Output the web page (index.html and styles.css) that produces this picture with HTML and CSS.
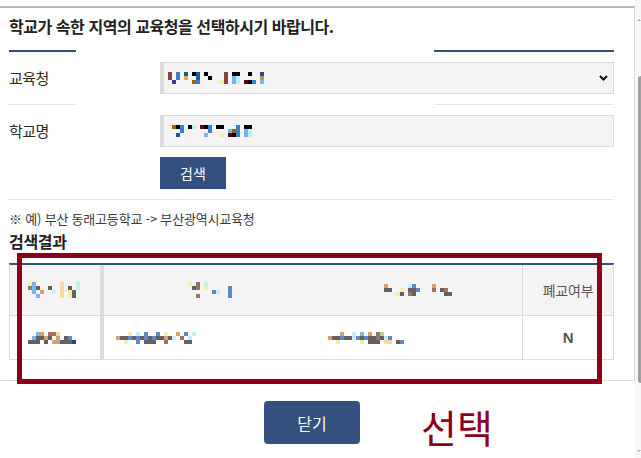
FILE: index.html
```html
<!DOCTYPE html>
<html lang="ko">
<head>
<meta charset="utf-8">
<title>교육청 선택</title>
<link rel="stylesheet" href="styles.css">
</head>
<body>
<div class="page">
  <div class="main">
    <div class="frame">
      <h2 class="title">학교가 속한 지역의 교육청을 선택하시기 바랍니다.</h2>
      <div class="rule"></div>
      <div class="field">
        <div class="label">교육청</div>
        <div class="control select">
          <span class="mosaic" data-p="r.b.B.kB.k....r.kk..k..n|r.b.o..B..k...r.lc.....v|.n....Ob.....yr.lc.dkb.l"></span>
          <svg class="chev" width="9" height="6" viewBox="0 0 9 6"><polyline points="1,1 4.5,4.5 8,1" fill="none" stroke="#111" stroke-width="2"/></svg>
        </div>
      </div>
      <div class="sep broken"></div>
      <div class="field second">
        <div class="label">학교명</div>
        <div class="control input">
          <span class="mosaic" data-p="Okb.kc.dkb.kk...b.kk|..b......b....lOb.lc|.B......l...y.dkb.lc"></span>
        </div>
      </div>
      <div class="actions"><button class="btn-search" type="button">검색</button></div>
      <div class="sep"></div>
      <p class="note">※ 예) 부산 동래고등학교 -&gt; 부산광역시교육청</p>
      <h3 class="subtitle">검색결과</h3>
      <div class="table">
        <div class="row head">
          <div class="cell c1"><span class="mosaic" data-p="yl......t...c.|wlg..g..t.g.c.|.l.p..c.t.yg..|..l.....t.yg.."></span></div>
          <div class="cell c2"><span class="mosaic" data-p="y.w.c......|.gw.y.....s|......sc..s|..w.......s"></span></div>
          <div class="cell c3"><span class="mosaic" data-p="p.....cs....p....|gg..y.ggs...w.gw.|...yg.wg.......gg"></span></div>
          <div class="cell c4">폐교여부</div>
        </div>
        <div class="row body">
          <div class="cell c1"><span class="mosaic" data-p="..lp.wwt......|.lggpg.p.gs...|ggg.g.ppgggn.."></span></div>
          <div class="cell c2"><span class="mosaic" data-p="...y.c.s..s.y..p.s.c|pggsgsgsgsggpgc.w.c.|..y..s.ggg..w....gg."></span></div>
          <div class="cell c3"><span class="mosaic" data-p="...p..c.l.p.we......|pggsggcsgsggwgcs....|..y.....y.ggg.tt.gs."></span></div>
          <div class="cell c4 strong">N</div>
        </div>
      </div>
    </div>
    <div class="footer"><button class="btn-close" type="button">닫기</button></div>
  </div>
  <div class="scrollbar">
    <span class="arrow up"></span>
    <div class="track"><div class="thumb"></div></div>
    <span class="arrow down"></span>
  </div>
  <div class="annot-box"></div>
  <div class="annot-text">선택</div>
</div>
<script src="app.js"></script>
</body>
</html>
```

FILE: styles.css
```css
* { box-sizing: border-box; }
html, body { margin: 0; padding: 0; background: #fff; }
body {
  font-family: "Noto Sans CJK KR", "Noto Sans", "Liberation Sans", sans-serif;
  color: #333;
  width: 641px;
  height: 458px;
  overflow: hidden;
}
.page {
  position: relative;
  display: flex;
  width: 641px;
  height: 458px;
}
.main {
  width: 635px;
  padding-top: 6px;
}
.frame {
  width: 635px;
  border-top: 2px solid #b9b9b9;
  border-right: 1px solid #dcdcdc;
  border-bottom: 1px solid #dcdcdc;
  padding: 0 20px 20px 9px;
}
.title {
  margin: 8px 0 14px;
  font-size: 16px;
  line-height: 20px;
  font-weight: 700;
  letter-spacing: -0.45px;
  color: #222;
}
.rule {
  height: 2px;
  background: linear-gradient(to right, #34507e 0, #34507e 67px, transparent 67px, transparent 425px, #34507e 425px);
}
.field {
  display: flex;
  align-items: center;
  padding: 10px 0;
}
.field.second { padding-bottom: 0; }
.label {
  width: 151px;
  font-size: 15px;
  line-height: 20px;
  letter-spacing: -0.5px;
  color: #2a2a2a;
}
.control {
  flex: 1;
  height: 32px;
  background: #f4f4f4;
  border: 1px solid #dcdcdc;
  border-left: 4px solid #dcdcdc;
  display: flex;
  align-items: center;
  justify-content: space-between;
  padding: 0 5px 0 4px;
}
.control.input { padding-left: 8px; }
.chev { display: block; }
.sep {
  height: 1px;
  background: #e6e6e6;
}
.sep.broken {
  background: linear-gradient(to right, #e6e6e6 0, #e6e6e6 67px, transparent 67px, transparent 425px, #e6e6e6 425px);
}
.actions {
  padding: 10px 0 10px 151px;
}
.btn-search {
  display: block;
  width: 66px;
  height: 32px;
  border: 0;
  background: #34507e;
  color: #fff;
  font-family: inherit;
  font-size: 14px;
  line-height: 32px;
  padding: 0;
}
.note {
  margin: 8px 0 0;
  font-size: 13px;
  line-height: 22px;
  letter-spacing: -0.2px;
  color: #3a3a3a;
}
.subtitle {
  margin: 0 0 11px;
  font-size: 16px;
  line-height: 22px;
  font-weight: 700;
  letter-spacing: -0.3px;
  color: #222;
}
.table {
  border-top: 2px solid #34507e;
  border-left: 1px solid #dcdcdc;
  border-right: 1px solid #dcdcdc;
  border-bottom: 1px solid #dcdcdc;
}
.row { display: flex; }
.row.head {
  height: 51px;
  background: #f4f4f4;
  border-bottom: 1px solid #dcdcdc;
}
.row.body { height: 43px; background: #fff; }
.cell {
  display: flex;
  align-items: center;
  justify-content: center;
  font-size: 14px;
  color: #555;
}
.c1 { width: 94px; border-right: 4px solid #dcdcdc; justify-content: flex-start; padding-left: 18px; }
.c2 { width: 208px; }
.c3 { width: 210px; }
.c4 { flex: 1; border-left: 1px solid #dcdcdc; letter-spacing: -0.2px; }
.strong { font-weight: 700; font-family: "Liberation Sans", sans-serif; font-size: 15px; }
.row.head .c2 { justify-content: flex-start; padding-left: 84px; }
.row.head .c3 { justify-content: flex-start; padding-left: 72px; }
.row.body .c2 { justify-content: flex-start; padding-left: 12px; }
.row.body .c3 { justify-content: flex-start; padding-left: 16px; }

.mosaic { display: inline-flex; flex-direction: column; }
.mrow { display: flex; height: 4px; }
.mc { width: 4px; height: 4px; }

.footer {
  display: flex;
  padding: 20px 0 0 264px;
}
.btn-close {
  width: 96px;
  height: 43px;
  border: 0;
  border-radius: 4px;
  background: #34507e;
  color: #fff;
  font-family: inherit;
  font-size: 16px;
  padding: 0;
}
.scrollbar {
  width: 6px;
  height: 458px;
  background: #f7f7f7;
  display: flex;
  flex-direction: column;
  align-items: flex-end;
}
.arrow {
  width: 0; height: 0;
  border-left: 2px solid transparent;
  border-right: 2px solid transparent;
}
.arrow.up { border-bottom: 2px solid #aaa; margin-top: 19px; }
.arrow.down { border-top: 2px solid #aaa; margin-bottom: 6px; }
.track { flex: 1; width: 6px; display: flex; justify-content: flex-end; }
.thumb {
  width: 3px;
  height: 307px;
  margin-top: 55px;
  background: #a0a0a0;
  border-radius: 3px 0 0 3px;
}
.annot-box {
  position: absolute;
  left: 17px;
  top: 253px;
  width: 585px;
  height: 131px;
  border: 5px solid #8a0019;
}
.annot-text {
  position: absolute;
  left: 421px;
  top: 398px;
  font-size: 39px;
  line-height: 56px;
  color: #8a0019;
  font-weight: 400;
}
```

FILE: app.js
```js
(function () {
  var colors = {
    k: '#000000', b: '#3a80c8', B: '#1a5aa0', n: '#3c3c8c', r: '#8b4040',
    o: '#f0a060', O: '#a06010', y: '#f2eea8', c: '#c0f0f8', l: '#7ab4ee',
    d: '#600010', v: '#a0a060', g: '#626262', p: '#d8a070', w: '#a07060',
    s: '#6088c8', t: '#f8d8a0', e: '#b8d890'
  };
  var list = document.querySelectorAll('.mosaic');
  for (var i = 0; i < list.length; i++) {
    var rows = list[i].getAttribute('data-p').split('|');
    for (var r = 0; r < rows.length; r++) {
      var row = document.createElement('span');
      row.className = 'mrow';
      for (var j = 0; j < rows[r].length; j++) {
        var cell = document.createElement('span');
        cell.className = 'mc';
        var ch = rows[r].charAt(j);
        if (colors[ch]) cell.style.background = colors[ch];
        row.appendChild(cell);
      }
      list[i].appendChild(row);
    }
  }
})();
```
